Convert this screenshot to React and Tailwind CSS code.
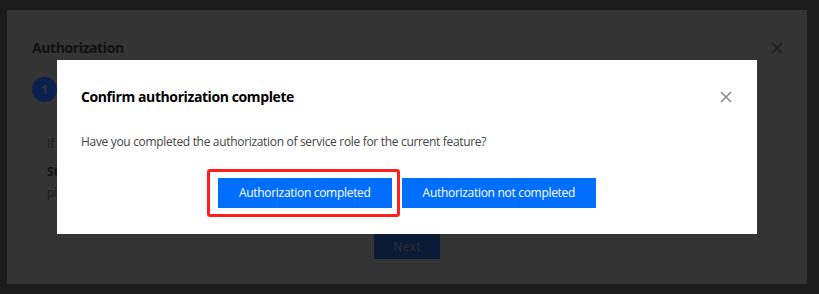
import React from 'react';

const CloseIcon = ({ className }) => (
  <svg viewBox="0 0 12 12" className={className} fill="none" stroke="currentColor" strokeWidth="1.6">
    <path d="M1 1l10 10M11 1L1 11" />
  </svg>
);

const App = () => {
  return (
    <div className="w-[819px] h-[294px] bg-[#1b1b1b] pt-[10px] pl-[7px] font-['Open_Sans',sans-serif]">
      {/* Dimmed background dialog */}
      <div className="relative w-[800px] h-[274px] bg-[#343434] px-[25px] pt-[28px]">
        <div className="flex items-center justify-between">
          <h2 className="text-[14px] font-bold text-[#111111] leading-[20px] tracking-[-0.4px]">Authorization</h2>
          <CloseIcon className="w-[12px] h-[12px] mr-[-1px] text-[#1c1c1c]" />
        </div>
        <div className="mt-[19px] w-[25px] h-[25px] rounded-full bg-[#0a2150] flex items-center justify-center text-[#343434] text-[13px] font-bold">
          1
        </div>
        <div className="pl-[15px] mt-[33px] text-[12px] text-[#1e1e1e] leading-[18px]">
          <p>If</p>
          <p className="mt-[10px] font-bold text-[#111111]">St</p>
          <p className="mt-[3px]">pl</p>
        </div>
        <div className="absolute left-0 right-0 bottom-[25px] flex justify-center">
          <button className="w-[66px] h-[25px] bg-[#0b1a35] text-[#262b35] text-[12px] font-semibold">Next</button>
        </div>

        {/* Confirm modal */}
        <div className="absolute left-[50px] top-[50px] w-[700px] h-[174px] bg-white px-[24px] pt-[26px]">
          <div className="flex items-center justify-between">
            <h3 className="text-[14px] font-bold text-black leading-[22px] tracking-[-0.4px]">Confirm authorization complete</h3>
            <CloseIcon className="w-[12px] h-[12px] mr-[1px] text-[#888888]" />
          </div>
          <p className="mt-[24px] text-[12px] text-[#444444] leading-[20px] tracking-[-0.32px]">
            Have you completed the authorization of service role for the current feature?
          </p>
          <div className="mt-[26px] flex justify-center gap-[10px] tracking-[-0.3px]">
            <div className="relative">
              <button className="h-[30px] px-[21px] bg-[#006eff] text-white text-[12px]">Authorization completed</button>
              <div className="absolute left-[-11px] right-[-8px] top-[-9px] bottom-[-9px] border-[3px] border-[#ff1f1f] rounded-[3px]" />
            </div>
            <button className="h-[30px] px-[21px] bg-[#006eff] text-white text-[12px]">Authorization not completed</button>
          </div>
        </div>
      </div>
    </div>
  );
};

export default App;
